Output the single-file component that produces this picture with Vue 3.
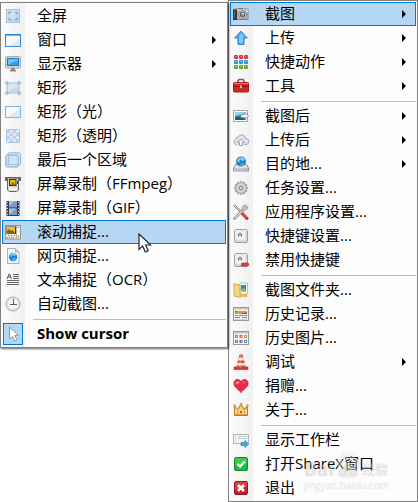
<script setup>
import { ref } from 'vue'

const showCursor = ref(true)
const activeCapture = ref('scroll')
const activeMain = ref('camera')

const captureItems = [
  { icon: 'fullscreen', label: '全屏' },
  { icon: 'window', label: '窗口', sub: true },
  { icon: 'monitor', label: '显示器', sub: true },
  { icon: 'rect', label: '矩形' },
  { icon: 'rectLight', label: '矩形（光）' },
  { icon: 'rectClear', label: '矩形（透明）' },
  { icon: 'region', label: '最后一个区域' },
  { icon: 'recorder', label: '屏幕录制（FFmpeg）' },
  { icon: 'film', label: '屏幕录制（GIF）' },
  { icon: 'scroll', label: '滚动捕捉...' },
  { icon: 'web', label: '网页捕捉...' },
  { icon: 'ocr', label: '文本捕捉（OCR）' },
  { icon: 'clock', label: '自动截图...' }
]

const mainGroups = [
  [
    { icon: 'camera', label: '截图', sub: true },
    { icon: 'upload', label: '上传', sub: true },
    { icon: 'grid', label: '快捷动作', sub: true },
    { icon: 'toolbox', label: '工具', sub: true }
  ],
  [
    { icon: 'afterCapture', label: '截图后', sub: true },
    { icon: 'cloud', label: '上传后', sub: true },
    { icon: 'drive', label: '目的地...', sub: true },
    { icon: 'gear', label: '任务设置...' },
    { icon: 'tools', label: '应用程序设置...' },
    { icon: 'key', label: '快捷键设置...' },
    { icon: 'keyMinus', label: '禁用快捷键' }
  ],
  [
    { icon: 'folder', label: '截图文件夹...' },
    { icon: 'history', label: '历史记录...' },
    { icon: 'images', label: '历史图片...' },
    { icon: 'cone', label: '调试', sub: true },
    { icon: 'heart', label: '捐赠...' },
    { icon: 'crown', label: '关于...' }
  ],
  [
    { icon: 'toolbar', label: '显示工作栏' },
    { icon: 'check', label: '打开ShareX窗口' },
    { icon: 'exit', label: '退出' }
  ]
]

const dots = [1, 6, 11]
  .map((y, r) => [1, 6, 11].map(x => {
    const c = ['#d8303c', '#2f8fd0', '#5aac30'][r]
    const light = ['#f07078', '#78c4f0', '#98dc68'][r]
    return `<rect x="${x}" y="${y}" width="4" height="4" rx="1" fill="${c}"/><rect x="${x + 1}" y="${y + 1}" width="2" height="1" fill="${light}"/>`
  }).join(''))
  .join('')

const teeth = [0, 30, 60, 90, 120, 150]
  .map(a => `<rect x="6.7" y="1" width="2.6" height="14" rx="1" transform="rotate(${a} 8 8)"/>`)
  .join('')

const keycap = '<rect x="1.5" y="1.5" width="13" height="13" rx="1.5" fill="#d4d4d4" stroke="#a0a0a0"/><path d="M2 2h12v1H3v10H2z" fill="#f2f2f2"/><rect x="3.5" y="3" width="9" height="9" rx="1" fill="#f5f5f5" stroke="#e3e3e3"/><path d="M5.5 8.5V6l1-1h1l1 1v2.5M5.5 7h3" fill="none" stroke="#6b6b6b"/>'

const icons = {
  fullscreen: '<rect x="1.5" y="1.5" width="13" height="13" fill="#d3e3f3" stroke="#a4bedb"/><path d="M2 14L14 3v11z" fill="#c6daee"/><path d="M4 6.5V4h2.5M9.5 4H12v2.5M12 9.5V12H9.5M6.5 12H4V9.5" fill="none" stroke="#6e93bc"/>',
  window: '<rect x=".5" y="2.5" width="15" height="12" fill="#f7f8fa" stroke="#3e8bcc"/><path d="M0 2h16v2H0z" fill="#2b86d0"/><path d="M1 3h14v1H1z" fill="#69baf0"/><path d="M4 14L15 6v8z" fill="#e5e8eb"/>',
  monitor: '<rect x=".5" y=".5" width="15" height="11.5" rx="1" fill="#d6d6d3" stroke="#aaa"/><path d="M2 2h12v8H2z" fill="#1b76bd"/><path d="M3 3h10v1.5L3 9z" fill="#69c1ee"/><path d="M3 9l10-4.500V9z" fill="#3a9ce0"/><path d="M6 12h4v2h1v1.500H5V14h1z" fill="#8a8a8a"/>',
  rect: '<rect x="2" y="3" width="12" height="10" fill="#d8e6f4" stroke="#a4bfdc"/><path d="M3 12L13 5v7z" fill="#c8dbee"/><g fill="#f4f8fc" stroke="#7c9fc5"><circle cx="1.8" cy="2.8" r="1.3"/><circle cx="14.2" cy="2.8" r="1.3"/><circle cx="1.8" cy="13.2" r="1.3"/><circle cx="14.2" cy="13.2" r="1.3"/></g>',
  rectLight: '<rect x=".5" y="2.5" width="15" height="11" fill="#f7fafd" stroke="#91b1d2"/><path d="M2 13L15 5v8z" fill="#dce8f4"/>',
  rectClear: '<rect x="1.5" y="1.5" width="13" height="13" rx="1" fill="#dde9f5" stroke="#a9c4df"/><path d="M2 2h3v3H2zM8 2h3v3H8zM5 5h3v3H5zM11 5h3v3h-3zM2 8h3v3H2zM8 8h3v3H8zM5 11h3v3H5zM11 11h3v3h-3z" fill="#b9d0e7"/>',
  region: '<rect x="3" y=".8" width="12.500" height="12" rx="1.5" fill="#deebf6" stroke="#8fb4d7"/><rect x=".8" y="3" width="12.5" height="12" rx="1.5" fill="#c9dff2" stroke="#82a9d0"/><rect x="3.5" y="3.500" width="9.500" height="9" fill="#d0e3f4" stroke="#9fc3e3"/>',
  recorder: '<path d="M0 1h16v4h-2V3H2v2H0z" fill="#6b6761"/><path d="M2.500 2h11v12l-2 1.500h-7l-2-1.500z" fill="#dddbd7" stroke="#69665f"/><path d="M4 3h7.500v7H4z" fill="#343029"/><path d="M5 4h5.500v5H5z" fill="#eab813"/><path d="M5 9l3-3 2.500 3z" fill="#9d7109"/><path d="M4 12h8v2H4z" fill="#f2f2ef"/><path d="M12 5h1v3h-1z" fill="#444"/>',
  film: '<path d="M1.500 1h13v15h-13z" fill="#3a3d43"/><path d="M4 1h8v6.500H4zM4 8.500h8V15H4z" fill="#799bc9"/><path d="M4 1h6L4 6zM4 8.500h7L4 15z" fill="#a6c0e1"/><path d="M2 2h1v1H2zM2 5h1v1H2zM2 8h1v1H2zM2 11h1v1H2zM2 14h1v1H2zM13 2h1v1h-1zM13 5h1v1h-1zM13 8h1v1h-1zM13 11h1v1h-1zM13 14h1v1h-1z" fill="#d4d6d8"/>',
  scroll: '<rect x=".5" y="1.5" width="15" height="13.500" fill="#ece9df" stroke="#99958b"/><path d="M1.5 2.500H11V10H1.500z" fill="#3a3320"/><path d="M2 3h8v6.500H2z" fill="#edc127"/><path d="M2 9.500V7l2-2 2 2 2-1 2 3.500z" fill="#806216"/><path d="M11.500 2v13" stroke="#b7b2a6"/><path d="M12.500 3h2v8h-2z" fill="#fff"/><path d="M13 3h1v1h-1zM13 12h1v1h-1z" fill="#645f52"/><path d="M3 11h1v1H3zM6 11h1v1H6zM9 11h1v1H9z" fill="#c65342"/><path d="M2 13h1v1H2zM4 13h1v1H4zM6 13h1v1H6zM8 13h1v1H8z" fill="#739843"/>',
  web: '<path d="M2.5.5h8L14 4v11.500H2.500z" fill="#f5f8fa" stroke="#a8b2ba"/><path d="M10.500.5V4H14z" fill="#dbe2e8" stroke="#a8b2ba"/><circle cx="8" cy="9" r="4.2" fill="#2383cd"/><path d="M4.500 8Q6 4.500 9 5l2 1-1 2-3-1-1 2z" fill="#8bd5f6"/><path d="M7 12l1-2 3 .5-2 2.300z" fill="#65bae6"/>',
  ocr: '<path d="M2 7l2-5h.5l2 5M3 5h3" fill="none" stroke="#555"/><path d="M8 2.500h6M8 4.500h6M8 6.500h6M2 8.500h12M2 10.500h12M2 12.500h12" stroke="#686868"/>',
  clock: '<circle cx="8" cy="8" r="7" fill="#e6eae7" stroke="#a3aaa5"/><circle cx="8" cy="8" r="5.500" fill="#f4f6f4" stroke="#d5dad6" stroke-width=".6"/><path d="M8.500 3v6M5 8.500h7" fill="none" stroke="#59635c"/>',
  pointer: '<path d="M4.500 1v12l3-2.500 2 4.500 2.300-1-2-4.500h3.700z" fill="#fff" stroke="#8b97a5"/>',
  camera: '<path d="M1 3h14v10.500H1z" fill="#b9b7b5" stroke="#858280"/><path d="M1 3.500h14v1H1z" fill="#e4e2e0"/><path d="M0 3.500h4V14H0z" fill="#353331"/><path d="M1 5h1v7H1z" fill="#77736f"/><path d="M5 2h5v1H5z" fill="#77736f"/><circle cx="9.500" cy="8.500" r="4" fill="#e6e5e6" stroke="#858387"/><circle cx="9.500" cy="8.500" r="2.400" fill="#8e8ba1" stroke="#4e4a55"/><path d="M9 7h2v1H9z" fill="#fff"/><path d="M13 5h2v1h-2z" fill="#f5f3c4"/>',
  upload: '<path d="M8 1.200L14.300 8H11v6.500H5V8H1.700z" fill="#43a7e8" stroke="#2e86cb"/><path d="M8 2.800l3.700 4H10v6.500H6V7z" fill="#7bcafa"/>',
  grid: dots,
  toolbox: '<path d="M5 5V3l1-1.500h4L11 3v2" fill="none" stroke="#686464" stroke-width="1.500"/><rect x=".5" y="4.500" width="15" height="9.500" rx="1" fill="#d92324" stroke="#a81819"/><path d="M1 5h14v1H1z" fill="#f28070"/><path d="M0 8h16v1H0z" fill="#8d1012"/><path d="M7 7h2v3.500H7z" fill="#f0e5dd" stroke="#74201c" stroke-width=".5"/>',
  afterCapture: '<path d="M.5 2.500h14v11H.5z" fill="#fff" stroke="#91a8ba"/><path d="M2 4h11v8H2z" fill="#2d7ebd"/><path d="M2 4h11v2L2 8z" fill="#91d1f3"/><path d="M2 10l4-1 7 3H2z" fill="#285944"/><path d="M8 6.500h4V4.500L15.500 8 12 11.500v-2H8z" fill="#f6fafb" stroke="#7c9297"/>',
  cloud: '<path d="M4 12.500H3A2.700 2.700 0 0 1 2.500 7.500 3 3 0 0 1 5 5a4 4 0 0 1 7.500 1.500A3 3 0 0 1 13 12.500h-1.500" fill="#e0e2ec" stroke="#a1a5b9"/><path d="M8 7l3.500 3.500h-2v3h-3v-3h-2z" fill="#f6f6fa" stroke="#989eb0"/>',
  drive: '<path d="M3 8h10l2.500 4v3H.5v-3z" fill="#e0e2e4" stroke="#8d9297"/><path d="M1 12h14v2.500H1z" fill="#c2c6c9"/><circle cx="8" cy="5.500" r="5" fill="#277fc6"/><path d="M4 5Q5 1 9 1.300q3 1 2.500 3L9 5 7 3 6 7z" fill="#86cdf5"/><path d="M7 9l2-2 2 1-2 2z" fill="#60afe1"/><path d="M12 13h2v1h-2z" fill="#3ae03a"/>',
  gear: `<g fill="#a8aaac">${teeth}<circle cx="8" cy="8" r="5.500"/></g><circle cx="8" cy="8" r="4.700" fill="#d9dadb"/><circle cx="8" cy="8" r="3" fill="#b9babc"/><circle cx="8" cy="8" r="1.500" fill="#f3f3f3" stroke="#85878a"/>`,
  tools: '<path d="M1 1l8 8" stroke="#777" stroke-width="2"/><path d="M1 1l7 7" stroke="#ddd"/><path d="M8.500 8.500l5.500 6" stroke="#c52f32" stroke-width="3" stroke-linecap="round"/><path d="M9 8.500l4.500 5" stroke="#f17476"/><path d="M1.500 14.500L11 5" stroke="#89898a" stroke-width="2.800" stroke-linecap="round"/><path d="M1.500 14.500L11 5" stroke="#dededf" stroke-width="1.200"/><path d="M13.500 1.500L11 1 9 3.500 9.500 6 12 6.500 14.800 4.500V2.500L12.500 4l-1-1z" fill="#d1d1d2" stroke="#89898a" stroke-width=".8"/>',
  key: keycap,
  keyMinus: keycap + '<rect x="8.5" y="11" width="7" height="3" rx="1" fill="#e83b43" stroke="#b51f2b" stroke-width=".7"/>',
  folder: '<path d="M2 2h4v2h8v11H2z" fill="#d9a942"/><path d="M7 1h7.500v11H7z" fill="#fafafa" stroke="#9aacae" stroke-width=".7"/><path d="M8 3h5v7H8z" fill="#3285cb"/><path d="M8 8l3-2 2 4H8z" fill="#a3c34c"/><path d="M1 1.500l6 2v12l-6-2z" fill="#f5d781" stroke="#cda24b" stroke-width=".8"/><path d="M7 12h6v3H7z" fill="#e7bd58"/>',
  history: '<rect x=".5" y="1.5" width="15" height="13" fill="#f3f3f2" stroke="#999"/><path d="M1 2h14v1.500H1z" fill="#c7c7c6"/><path d="M2 5h12v3H2z" fill="#96601e"/><path d="M5 5h9v1L7 8H2V7z" fill="#dda238"/><path d="M2 9.500h3M6 9.500h4M11 9.500h3M2 11.500h5M9 11.500h5" stroke="#85837e"/><path d="M1 13h14v1H1z" fill="#d4d4d3"/>',
  images: '<rect x=".5" y="1.5" width="15" height="13" fill="#f4f4f3" stroke="#999"/><path d="M1 2h14v1.500H1z" fill="#c7c7c6"/><path d="M2 5h3v3H2z" fill="#45a5ce"/><path d="M6.500 5h3v3h-3z" fill="#d3665c"/><path d="M11 5h3v3h-3z" fill="#ca9b50"/><path d="M2 10h3v3H2z" fill="#659350"/><path d="M6.500 10h3v3h-3z" fill="#9c5c89"/><path d="M11 10h3v3h-3z" fill="#5299b8"/><path d="M3 6h1v1H3zM8 6h1v1H8zM12 6h1v1h-1zM3 11h1v1H3zM8 11h1v1H8zM12 11h1v1h-1z" fill="#efeeda"/>',
  cone: '<path d="M1 13h3l1-1h6l1 1h3v2.500H1z" fill="#d23b30" stroke="#ae2c26" stroke-width=".6"/><path d="M6.500.5h3L13 13.500H3z" fill="#e4483a"/><path d="M5.800 3.500h4.400l.8 3H5zM4.300 9h7.400l.7 2.500H3.500z" fill="#ece8e3"/><path d="M7 1h1v12H6z" fill="#fff" opacity=".3"/>',
  heart: '<path d="M8 14.500C6.500 12 1 9.500 1 5.300 1 .8 6.500.5 8 4c1.500-3.500 7-3.200 7 1.300 0 4.200-5.500 6.700-7 9.200z" fill="#e9274e" stroke="#c91f46"/><path d="M2.500 5C3 2.500 5.500 2.300 7 4.500q-2 2-4 2z" fill="#f8819a"/><path d="M9 4.500Q11 2 13 4l-3 2z" fill="#f4526f"/>',
  crown: '<path d="M1.500 13.500V4l3.300 3L8 2l3.200 5 3.300-3v9.500z" fill="#e3b04c" stroke="#b98129"/><path d="M2 12V6l3 3 3-5 3 5 3-3v6z" fill="#f6d47c"/><path d="M2 12.500h12" stroke="#cf9a42"/><g fill="#dba139"><circle cx="1.500" cy="3.500" r="1.200"/><circle cx="8" cy="2" r="1.200"/><circle cx="14.500" cy="3.500" r="1.200"/></g><path d="M7 9h2v2H7zM4 10h1v1H4zM11 10h1v1h-1z" fill="#bf5a27"/>',
  toolbar: '<rect x=".5" y="2.5" width="15" height="9" fill="#f2f3f4" stroke="#b2b5b8"/><path d="M2 4.500h1M2 6.500h1M2 8.500h1M5 4.500h9M5 6.500h8" stroke="#c7cacc"/><path d="M8 10.500h4V8.500l3.700 3.500-3.700 3.500v-2H8z" fill="#42a7e2" stroke="#2683c1" stroke-width=".7"/>',
  check: '<rect x="1.5" y="1.5" width="13" height="13" rx="1.5" fill="#22b83c" stroke="#158a2a"/><path d="M2 2h12v5L2 10z" fill="#50d260" opacity=".6"/><path d="M4.500 8L7 10.500 12 5.500" fill="none" stroke="#fff" stroke-width="2.400"/>',
  exit: '<rect x="1.5" y="1.5" width="13" height="13" rx="1.5" fill="#c61d2a" stroke="#951721"/><path d="M2 2h12v5L2 10z" fill="#e45a60" opacity=".6"/><path d="M5 5l6 6M11 5l-6 6" stroke="#fff" stroke-width="2.600"/>'
}
</script>

<template>
  <main class="menus">
    <div class="menu capture" role="menu">
      <button
        v-for="item in captureItems"
        :key="item.icon"
        class="row"
        :class="{ active: activeCapture === item.icon }"
        role="menuitem"
        @mouseenter="activeCapture = item.icon"
      >
        <span class="cell"><svg viewBox="0 0 16 16" v-html="icons[item.icon]"></svg></span>
        <span class="label">{{ item.label }}</span>
        <span v-if="item.sub" class="arrow"></span>
      </button>
      <hr />
      <label class="row bold">
        <span class="cell">
          <input v-model="showCursor" type="checkbox" />
          <svg viewBox="0 0 16 16" v-html="icons.pointer"></svg>
        </span>
        <span class="label">Show cursor</span>
      </label>
      <svg class="mouse" viewBox="0 0 14 20">
        <path d="M1 1v15.500l3.700-3.400 2.600 5.900 2.900-1.300-2.600-5.700h5z" fill="#fff" stroke="#1c2530" stroke-width="1.200" />
      </svg>
    </div>

    <div class="menu main" role="menu">
      <template v-for="(group, g) in mainGroups" :key="g">
        <hr v-if="g > 0" />
        <button
          v-for="item in group"
          :key="item.icon"
          class="row"
          :class="{ active: activeMain === item.icon }"
          role="menuitem"
          @mouseenter="activeMain = item.icon"
        >
          <span class="cell"><svg viewBox="0 0 16 16" v-html="icons[item.icon]"></svg></span>
          <span class="label">{{ item.label }}</span>
          <span v-if="item.sub" class="arrow"></span>
        </button>
      </template>
      <div class="watermark">
        <div class="brand">
          <span>Bai</span>
          <span class="paw">
            <svg viewBox="0 0 24 28">
              <ellipse cx="4" cy="12" rx="3" ry="4" />
              <ellipse cx="9" cy="5" rx="3" ry="4" />
              <ellipse cx="16" cy="5" rx="3" ry="4" />
              <ellipse cx="21" cy="12" rx="3" ry="4" />
              <path d="M12 11c4 0 4 4 7 6 5 5 1 10-3 10H8c-5 0-8-5-3-10 3-2 3-6 7-6z" />
            </svg>
            <span class="du">du</span>
          </span>
          <span class="cn">经验</span>
        </div>
        <div class="site">jingyan.baidu.com</div>
      </div>
    </div>
  </main>
</template>

<style>
body {
  margin: 0;
  background: #fff;
}
</style>

<style scoped>
.menus {
  display: grid;
  grid-template-columns: 6fr 5fr;
  align-items: start;
  font-family: "Open Sans", "Noto Sans CJK SC", sans-serif;
  font-size: 15px;
  color: #000;
}

.menu {
  position: relative;
  display: flex;
  flex-direction: column;
  padding: 1px;
  border: 1px solid #808080;
  background: linear-gradient(90deg, #fbfbfb, #f0f0f0) 1px 0 / 23px 100% no-repeat #fdfdfd;
}

.capture {
  z-index: 1;
  margin-top: 2px;
  box-shadow: 1px 1px 2px rgba(0, 0, 0, 0.6);
}

.row {
  display: flex;
  align-items: center;
  box-sizing: border-box;
  height: 24px;
  padding: 0 9px 0 0;
  border: 1px solid transparent;
  background: none;
  color: inherit;
  font: inherit;
  line-height: 20px;
  text-align: left;
  white-space: nowrap;
}

.row.active {
  border-color: #0078d7;
  background: #b5d7f3;
}

.bold {
  font-weight: bold;
}

.cell {
  display: grid;
  place-items: center;
  width: 20px;
  height: 22px;
  margin-right: 14px;
}

.cell svg,
.cell input {
  grid-area: 1 / 1;
}

.cell svg {
  z-index: 1;
  width: 16px;
  height: 16px;
}

.cell input {
  appearance: none;
  box-sizing: border-box;
  width: 20px;
  height: 22px;
  margin: 0;
}

.cell input:checked {
  border: 1px solid #0078d7;
  background: #b5d7f3;
}

.label {
  flex: 1;
  padding-bottom: 2px;
}

.arrow {
  border: 4px solid transparent;
  border-left-color: #000;
  border-right: 0;
}

hr {
  height: 1px;
  margin: 3px 0 2px 31px;
  border: 0;
  background: #bdbdbd;
}

.mouse {
  position: absolute;
  left: 137px;
  top: 230px;
  width: 14px;
  height: 20px;
  pointer-events: none;
}

.watermark {
  position: absolute;
  right: 28px;
  bottom: 10px;
  color: rgba(255, 255, 255, 0.35);
  text-shadow: 0 0 1px rgba(0, 0, 0, 0.16);
  pointer-events: none;
}

.brand {
  display: flex;
  align-items: flex-end;
  gap: 2px;
  font-size: 19px;
  font-weight: bold;
  line-height: 20px;
}

.paw {
  display: grid;
  place-items: end center;
}

.paw svg,
.du {
  grid-area: 1 / 1;
}

.paw svg {
  width: 24px;
  height: 28px;
  fill: rgba(255, 255, 255, 0.35);
  filter: drop-shadow(0 0 1px rgba(0, 0, 0, 0.25));
}

.du {
  font-size: 15px;
  line-height: 18px;
}

.cn {
  font-size: 13px;
}

.site {
  font-size: 10px;
  line-height: 12px;
}
</style>
